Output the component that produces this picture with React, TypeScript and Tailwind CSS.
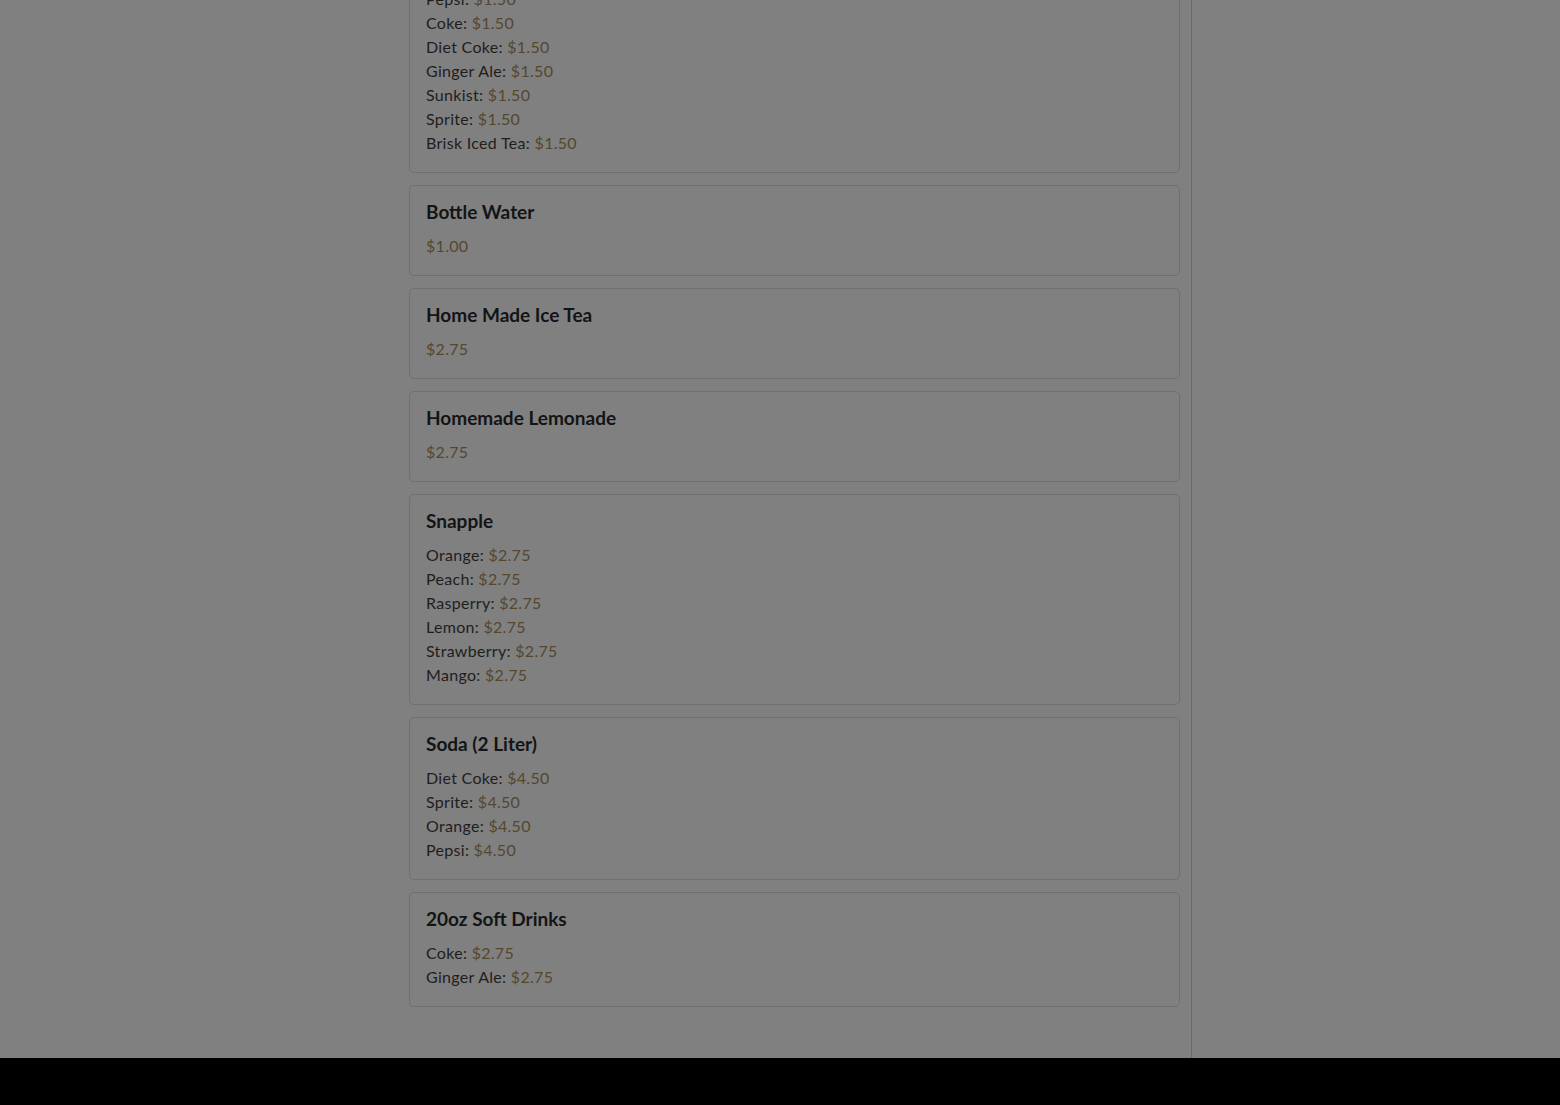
import React from "react";

type Section = { title: string; price?: string; items?: [string, string][] };

const sections: Section[] = [
  { title: "Bottle Water", price: "$1.00" },
  { title: "Home Made Ice Tea", price: "$2.75" },
  { title: "Homemade Lemonade", price: "$2.75" },
  {
    title: "Snapple",
    items: [
      ["Orange", "$2.75"],
      ["Peach", "$2.75"],
      ["Rasperry", "$2.75"],
      ["Lemon", "$2.75"],
      ["Strawberry", "$2.75"],
      ["Mango", "$2.75"],
    ],
  },
  {
    title: "Soda (2 Liter)",
    items: [
      ["Diet Coke", "$4.50"],
      ["Sprite", "$4.50"],
      ["Orange", "$4.50"],
      ["Pepsi", "$4.50"],
    ],
  },
  {
    title: "20oz Soft Drinks",
    items: [
      ["Coke", "$2.75"],
      ["Ginger Ale", "$2.75"],
    ],
  },
];

const first: Section = {
  title: "Soda (Can)",
  items: [
    ["Pepsi", "$1.50"],
    ["Coke", "$1.50"],
    ["Diet Coke", "$1.50"],
    ["Ginger Ale", "$1.50"],
    ["Sunkist", "$1.50"],
    ["Sprite", "$1.50"],
    ["Brisk Iced Tea", "$1.50"],
  ],
};

function Card({ s, className = "" }: { s: Section; className?: string }) {
  return (
    <div className={`border border-[#707070] rounded-[5px] px-4 pt-[14px] pb-[17px] ${className}`}>
      <h5 className="text-[19px] leading-[24px] font-bold text-[#131415] mb-[10px]">{s.title}</h5>
      {s.price && (
        <div className="text-[16px] leading-[24px] tracking-[0.3px] text-[#54472e]">{s.price}</div>
      )}
      {s.items &&
        s.items.map(([n, p], i) => (
          <div key={i} className="text-[16px] leading-[24px] tracking-[0.3px] text-[#1e1e1e]">
            {n}: <span className="text-[#54472e]">{p}</span>
          </div>
        ))}
    </div>
  );
}

export default function App() {
  return (
    <div
      className="w-full h-[1105px] overflow-hidden bg-[#808080] flex flex-col"
      style={{ fontFamily: "Lato, 'Noto Sans', sans-serif" }}
    >
      <div className="flex-1 flex overflow-hidden">
        <div className="w-[397px] shrink-0" />
        <div className="w-[795px] shrink-0 border-r border-[#6a6a6a] pl-3 pr-[11px] flex flex-col gap-3 h-full">
          <Card s={first} className="mt-[-62px]" />
          {sections.map((s, i) => (
            <Card key={i} s={s} />
          ))}
        </div>
      </div>
      <div className="h-[47px] bg-black shrink-0" />
    </div>
  );
}
